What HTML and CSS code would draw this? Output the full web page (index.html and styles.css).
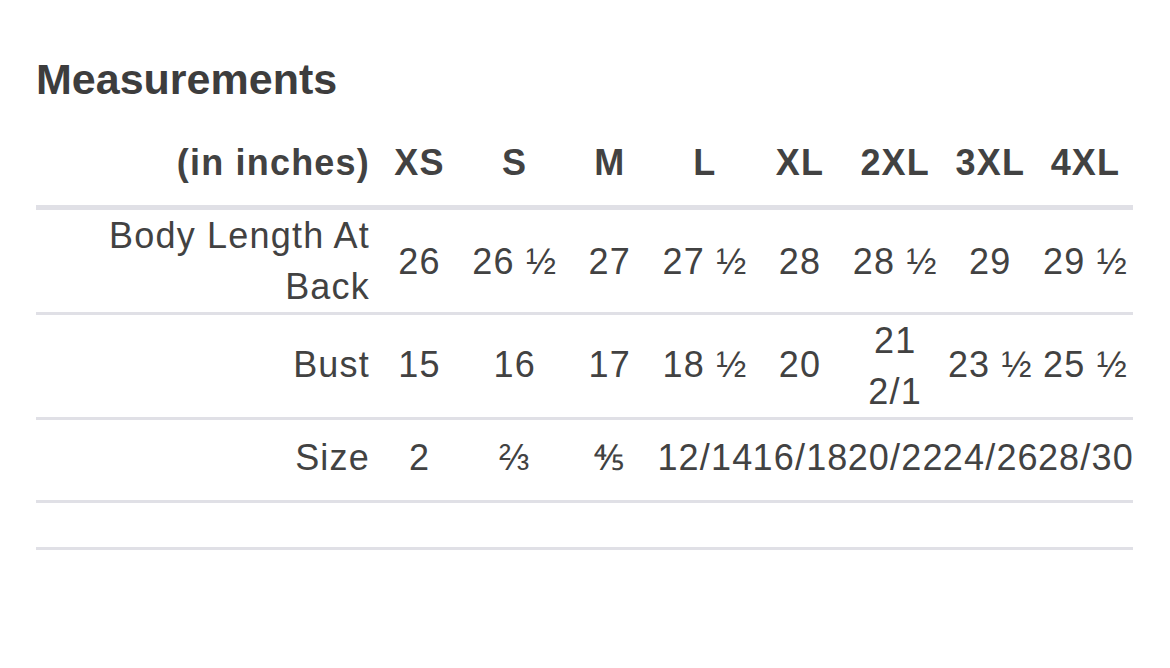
FILE: index.html
```html
<!DOCTYPE html>
<html lang="en">
<head>
<meta charset="utf-8">
<title>Measurements</title>
<link rel="stylesheet" href="styles.css">
</head>
<body>
<div class="page">
  <h1 class="title">Measurements</h1>
  <table class="measure">
    <colgroup>
      <col class="col-label">
      <col class="col-size"><col class="col-size"><col class="col-size"><col class="col-size">
      <col class="col-size"><col class="col-size"><col class="col-size"><col class="col-size">
    </colgroup>
    <thead>
      <tr>
        <th class="label">(in inches)</th>
        <th>XS</th><th>S</th><th>M</th><th>L</th><th>XL</th><th>2XL</th><th>3XL</th><th>4XL</th>
      </tr>
    </thead>
    <tbody>
      <tr>
        <td class="label">Body Length At Back</td>
        <td>26</td><td>26 ½</td><td>27</td><td>27 ½</td><td>28</td><td>28 ½</td><td>29</td><td>29 ½</td>
      </tr>
      <tr class="row-bust">
        <td class="label">Bust</td>
        <td>15</td><td>16</td><td>17</td><td>18 ½</td><td>20</td><td>21 2/1</td><td>23 ½</td><td>25 ½</td>
      </tr>
      <tr class="row-one">
        <td class="label">Size</td>
        <td>2</td><td>⅔</td><td>⅘</td><td>12/14</td><td>16/18</td><td>20/22</td><td>24/26</td><td>28/30</td>
      </tr>
      <tr class="row-empty">
        <td class="label"></td>
        <td></td><td></td><td></td><td></td><td></td><td></td><td></td><td></td>
      </tr>
    </tbody>
  </table>
</div>
</body>
</html>
```

FILE: styles.css
```css
body {
  margin: 0;
  background: #ffffff;
  font-family: "Liberation Sans", Arial, sans-serif;
  color: #424242;
}

.page {
  padding: 55px 37px 0 36px;
}

.title {
  margin: 0;
  font-size: 43px;
  line-height: 49px;
  font-weight: bold;
  color: #3d3d3d;
}

.measure {
  margin-top: 17px;
  width: 1097px;
  border-collapse: collapse;
  table-layout: fixed;
  font-size: 36px;
  letter-spacing: 1.2px;
}

.col-label {
  width: 336px;
}

.col-size {
  width: 95.125px;
}

.measure th,
.measure td {
  padding: 0;
  line-height: 51px;
  text-align: center;
  vertical-align: middle;
}

.measure thead th {
  padding: 16px 0 17px;
  font-weight: bold;
  border-bottom: 5px solid #e0e0e6;
}

.measure tbody td {
  border-bottom: 3px solid #e0e0e6;
}

.measure .label {
  text-align: right;
  padding-right: 2px;
}

.row-bust td {
  vertical-align: top;
  padding-top: 0;
}

.row-bust td:first-child,
.row-bust td:nth-child(n+2):not(:nth-child(7)) {
  vertical-align: middle;
  padding-bottom: 4px;
}

.row-one td {
  height: 68px;
  vertical-align: top;
  padding-top: 12px;
}

.row-empty td {
  height: 44px;
}
```
